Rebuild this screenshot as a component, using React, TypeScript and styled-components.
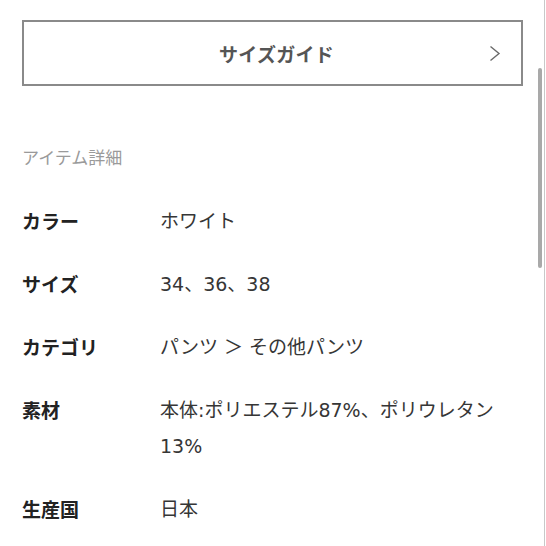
import React from "react";
import styled, { createGlobalStyle } from "styled-components";

const GlobalStyle = createGlobalStyle`
  html, body {
    margin: 0;
    padding: 0;
    background: #ffffff;
  }
  body {
    font-family: "Noto Sans CJK JP", "Noto Sans", "Liberation Sans", sans-serif;
    -webkit-font-smoothing: antialiased;
  }
`;

const Page = styled.div`
  position: relative;
  width: 546px;
  height: 546px;
  overflow: hidden;
  box-sizing: border-box;
  padding: 20px 23px 0 22px;
`;

const GuideButton = styled.button`
  display: grid;
  grid-template-columns: 1fr auto 1fr;
  align-items: center;
  width: 100%;
  height: 66px;
  margin: 0;
  padding: 0;
  background: #fff;
  border: 2px solid #8a8a8a;
  box-sizing: border-box;
  font-family: inherit;
  font-size: 19px;
  font-weight: 700;
  color: #555;
  letter-spacing: 0.3px;
  cursor: pointer;
`;

const GuideLabel = styled.span`
  grid-column: 2;
  padding-left: 8px;
`;

const Chevron = styled.svg`
  grid-column: 3;
  justify-self: end;
  margin-right: 20px;
`;

const SectionTitle = styled.h2`
  margin: 59px 0 0;
  font-size: 17px;
  line-height: 24px;
  font-weight: 400;
  color: #9a9a9a;
`;

const DetailList = styled.dl`
  display: flex;
  flex-direction: column;
  gap: 27px;
  margin: 34px 0 0;
`;

const Row = styled.div`
  display: grid;
  grid-template-columns: 138px 1fr;
`;

const Label = styled.dt`
  margin: 0;
  font-size: 19px;
  line-height: 36px;
  font-weight: 700;
  color: #222;
`;

const Value = styled.dd`
  margin: 0;
  font-family: "DejaVu Sans", "Noto Sans CJK JP", sans-serif;
  font-size: 19px;
  line-height: 36px;
  font-weight: 400;
  color: #363636;
`;

const ScrollTrack = styled.div`
  position: absolute;
  top: 0;
  right: 1px;
  width: 1px;
  height: 100%;
  background: #c8c8c8;
`;

const ScrollThumb = styled.div`
  position: absolute;
  top: 68px;
  right: 4px;
  width: 4px;
  height: 200px;
  border-radius: 2px;
  background: #a9a9a9;
`;

const details: { label: string; value: string }[] = [
  { label: "カラー", value: "ホワイト" },
  { label: "サイズ", value: "34、36、38" },
  { label: "カテゴリ", value: "パンツ ＞ その他パンツ" },
  { label: "素材", value: "本体:ポリエステル87%、ポリウレタン13%" },
  { label: "生産国", value: "日本" },
];

export default function App() {
  return (
    <>
      <GlobalStyle />
      <Page>
        <GuideButton type="button">
          <GuideLabel>サイズガイド</GuideLabel>
          <Chevron width="12" height="17" viewBox="0 0 12 17" fill="none">
            <path d="M1.5 1.5 L10 8.5 L1.5 15.5" stroke="#6a6a6a" strokeWidth="1.4" />
          </Chevron>
        </GuideButton>
        <SectionTitle>アイテム詳細</SectionTitle>
        <DetailList>
          {details.map((d) => (
            <Row key={d.label}>
              <Label>{d.label}</Label>
              <Value>{d.value}</Value>
            </Row>
          ))}
        </DetailList>
        <ScrollTrack />
        <ScrollThumb />
      </Page>
    </>
  );
}
